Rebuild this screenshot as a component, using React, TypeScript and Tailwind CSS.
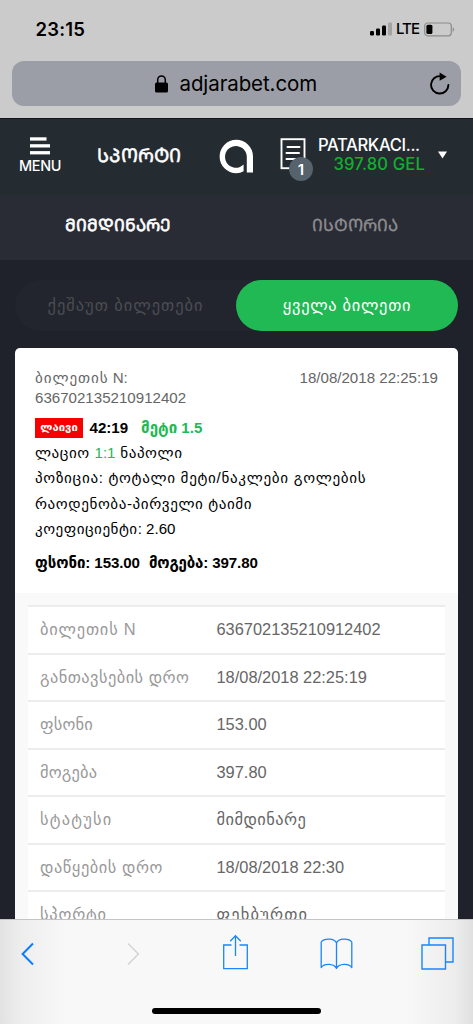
import React from 'react';

type Row = { label: string; value: string; labelClass?: string; valueClass?: string };

const rows: Row[] = [
  { label: 'ბილეთის N', value: '636702135210912402', labelClass: 'tracking-[0.8px]' },
  { label: 'განთავსების დრო', value: '18/08/2018 22:25:19', labelClass: 'tracking-[0.45px]' },
  { label: 'ფსონი', value: '153.00', labelClass: 'tracking-[0.2px]' },
  { label: 'მოგება', value: '397.80', labelClass: 'tracking-[0.2px]' },
  { label: 'სტატუსი', value: 'მიმდინარე', labelClass: 'tracking-[1.2px]', valueClass: 'tracking-[0.45px]' },
  { label: 'დაწყების დრო', value: '18/08/2018 22:30', labelClass: 'tracking-[0.55px]' },
  { label: 'სპორტი', value: 'ფეხბურთი', labelClass: 'tracking-[0.8px]', valueClass: 'tracking-[1.2px]' },
];

function StatusBar() {
  return (
    <div className="flex h-[61px] items-center justify-between pr-[18px] pl-[35.5px] font-['Inter',sans-serif] text-black">
      <span className="pb-[2px] text-[18.5px] font-semibold tracking-[0.2px]">23:15</span>
      <div className="flex items-center pb-[3px]">
        <svg width="22" height="14" viewBox="0 0 22 14">
          <rect x="0" y="9" width="4" height="4.5" rx="1.2" />
          <rect x="6" y="6.5" width="4" height="7" rx="1.2" />
          <rect x="12" y="3.5" width="4" height="10" rx="1.2" />
          <rect x="18" y="0.5" width="4" height="13" rx="1.2" fill="#a3a3a3" />
        </svg>
        <span className="ml-[4px] w-[23px] text-[15px] leading-[18px] font-medium tracking-[-0.95px]">LTE</span>
        <svg className="ml-[5px]" width="31" height="15" viewBox="0 0 31 15">
          <rect x="0.7" y="1" width="26.6" height="12.8" rx="3" fill="none" stroke="#8c8c8c" strokeWidth="1.2" />
          <rect x="2.4" y="2.7" width="6" height="9.4" rx="1.5" />
          <path d="M28.7 5.2c1.8.7 1.8 3.9 0 4.6z" fill="#8c8c8c" />
        </svg>
      </div>
    </div>
  );
}

function AddressBar() {
  return (
    <div className="mx-[12px] flex h-[45px] items-center rounded-[12px] bg-[#9b9ea6] pr-[10px] pl-[143px] text-black">
      <svg width="13" height="18" viewBox="0 0 13 18">
        <rect x="0" y="7.6" width="13" height="10" rx="1.6" />
        <path d="M2.7 8V4.9a3.8 4 0 0 1 7.6 0V8" fill="none" stroke="#000" strokeWidth="1.5" />
      </svg>
      <span className="ml-[11.5px] flex-1 font-['Inter',sans-serif] text-[20.5px] leading-[44px] tracking-[-0.1px]">adjarabet.com</span>
      <svg width="22" height="24" viewBox="0 0 22 24">
        <path d="M11.5 4.2A8.7 8.7 0 1 0 19.4 13" fill="none" stroke="#000" strokeWidth="1.9" strokeLinecap="round" />
        <path d="M10.6 0.5 17.6 4.7 10.6 8.8z" />
      </svg>
    </div>
  );
}

function SiteHeader() {
  return (
    <header className="flex h-[77px] items-start border-t border-[#12151d] bg-[#242b31] text-white">
      <div className="ml-[18px] flex w-[44px] flex-col items-center pt-[18px]">
        <svg width="20" height="18" viewBox="0 0 20 18" fill="#fff">
          <rect width="16.5" height="3.3" y="0.3" />
          <rect width="20" height="3.3" y="7.2" />
          <rect width="20" height="3.3" y="14.1" />
        </svg>
        <span className="mt-[2px] font-['Inter',sans-serif] text-[14.4px] leading-[18px] font-medium tracking-[-0.35px]">MENU</span>
      </div>
      <span className="mt-[24px] ml-[35px] w-[90px] font-['DejaVu_Sans',sans-serif] text-[19px] leading-[24px] whitespace-nowrap [-webkit-text-stroke:0.5px_#fff]">ᲡᲞᲝᲠᲢᲘ</span>
      <svg className="mt-[20px] ml-[32px]" width="35" height="36" viewBox="0 0 35 36">
        <path
          d="M34 17.5A16.7 16.7 0 1 0 17.3 34.2C20 34.2 22.5 33.4 24.6 32.2V25.6A10.9 10.9 0 1 1 27.8 17.5V33.4H34Z"
          fill="#fff"
        />
      </svg>
      <div className="relative mt-[19px] ml-[26px]">
        <svg width="26" height="32" viewBox="0 0 26 32" fill="none" stroke="#fff">
          <rect x="1.5" y="1.2" width="23" height="29" strokeWidth="1.9" />
          <path d="M7.5 9h12M6.5 15h12.5M6.5 21h12.5" strokeWidth="2" strokeLinecap="round" />
        </svg>
        <span className="absolute top-[19px] left-[9px] flex h-[24px] w-[24px] items-center justify-center rounded-full bg-[#56636d] font-['Inter',sans-serif] text-[15px] leading-none font-semibold">1</span>
      </div>
      <div className="mt-[17px] ml-[12px] w-[109px] font-['Inter',sans-serif] text-[16.6px] leading-[19px] font-medium whitespace-nowrap">
        <div className="tracking-[-0.35px]">PATARKACI...</div>
        <div className="pl-[15.5px] tracking-[0.15px] text-[#10b02e]">397.80 GEL</div>
      </div>
      <svg className="mt-[32px] ml-[11px]" width="9" height="8" viewBox="0 0 9 8">
        <path d="M0 0.5h9L4.5 7.5z" fill="#fff" />
      </svg>
    </header>
  );
}

function ViewTabs() {
  return (
    <nav className="flex h-[66px] border-b border-[#20222a] bg-[#292b35] pt-[18px] font-['DejaVu_Sans',sans-serif] text-[17px] leading-[24px]">
      <span className="flex-1 text-center text-white [-webkit-text-stroke:0.6px_#fff]">ᲛᲘᲛᲓᲘᲜᲐᲠᲔ</span>
      <span className="flex-1 text-center text-[#8d8d8f] [-webkit-text-stroke:0.3px_#8d8d8f]">ᲘᲡᲢᲝᲠᲘᲐ</span>
    </nav>
  );
}

function FilterToggle() {
  return (
    <div className="mx-[15px] mt-[19px] flex h-[51px] rounded-full bg-[#22252e] font-['Liberation_Sans','DejaVu_Sans',sans-serif] text-[16.4px] leading-[50px]">
      <span className="flex-1 text-center tracking-[1px] text-[#4c4d52]">ქეშაუთ ბილეთები</span>
      <span className="w-[222px] rounded-full bg-[#20b954] text-center tracking-[0.7px] text-white">ყველა ბილეთი</span>
    </div>
  );
}

function TicketSummary() {
  return (
    <div className="h-[245px] px-[20px] pt-[20px] text-[15.1px] leading-[25.2px] text-black">
      <div className="flex justify-between leading-[20px] text-[#666]">
        <div>
          <div><span className="tracking-[0.9px]">ბილეთის</span> N:</div>
          <div>636702135210912402</div>
        </div>
        <div>18/08/2018 22:25:19</div>
      </div>
      <div className="mt-[7px] flex items-center font-bold">
        <span className="flex h-[20px] w-[48px] items-center justify-center bg-[#f80000] text-[11.3px] text-white">ლაივი</span>
        <span className="ml-[6.5px]">42:19</span>
        <span className="ml-[13px] text-[#20b954]">მეტი 1.5</span>
      </div>
      <div className="tracking-[0.55px]">ლაციო <span className="tracking-normal text-[#20b954]">1:1</span> ნაპოლი</div>
      <div className="whitespace-nowrap tracking-[0.68px]">პოზიცია: ტოტალი მეტი/ნაკლები გოლების</div>
      <div className="tracking-[0.58px]">რაოდენობა-პირველი ტაიმი</div>
      <div><span className="tracking-[0.5px]">კოეფიციენტი</span>: 2.60</div>
      <div className="mt-[9px] flex gap-[9px] font-bold tracking-[-0.1px]">
        <span>ფსონი: 153.00</span>
        <span><span className="tracking-[-0.2px]">მოგება</span>: 397.80</span>
      </div>
    </div>
  );
}

function TicketDetails() {
  return (
    <div className="bg-[#f9f9f9] pt-[12px] pr-[13px] pl-[12.5px]">
      {rows.map((r) => (
        <div key={r.label} className="flex h-[47.55px] border-t-2 border-[#ececec] bg-white pl-[12.5px] text-[16.4px] leading-[45px]">
          <span className={`w-[176.5px] whitespace-nowrap text-[#999] ${r.labelClass ?? ''}`}>{r.label}</span>
          <span className={`text-[#666] ${r.valueClass ?? ''}`}>{r.value}</span>
        </div>
      ))}
    </div>
  );
}

function BrowserToolbar() {
  return (
    <footer className="flex h-[105px] flex-col border-t border-[#c4c4c4] bg-[linear-gradient(90deg,#e2e2e2_0,#ededed_4%,#f8f8f8_14%,#f8f8f8_86%,#ededed_96%,#e0e0e0_100%)]">
      <div className="flex h-[68px] items-center pl-[21px]">
        <svg width="13" height="24" viewBox="0 0 13 24" fill="none" stroke="#0a7cff" strokeWidth="2">
          <path d="M12 1.5 1.6 12 12 22.5" />
        </svg>
        <svg className="ml-[93px]" width="13" height="24" viewBox="0 0 13 24" fill="none" stroke="#d4d4d6" strokeWidth="1.6">
          <path d="M1 1.5 11.4 12 1 22.5" />
        </svg>
        <svg className="mb-[4px] ml-[82px]" width="26" height="36" viewBox="0 0 26 36" fill="none" stroke="#1a85ff" strokeWidth="1.3">
          <path d="M9.5 11H1.7v23.7h23.6V11h-7.8M13.5 22V1.5M8.2 7.2l5.3-5.4 5.3 5.4" />
        </svg>
        <svg className="ml-[72px]" width="33" height="32" viewBox="0 0 33 32" fill="none" stroke="#1a85ff" strokeWidth="1.3" strokeLinejoin="round">
          <path d="M16.5 5C14.5 0 4 0 1.2 4v25.5C4.5 25 14 25.5 16.5 30.5 19 25.5 28.5 25 31.8 29.5V4C29 0 18.5 0 16.5 5zv25.5" />
        </svg>
        <svg className="mb-[2px] ml-[67.5px]" width="33" height="34" viewBox="0 0 33 34" fill="none" stroke="#1a85ff" strokeWidth="1.4">
          <path d="M1 9h23.5v24H1zM8 9V2h24v24h-7.5" />
        </svg>
      </div>
      <div className="mx-auto mt-[20px] h-[6px] w-[169px] rounded-full bg-black" />
    </footer>
  );
}

export default function App() {
  return (
    <div className="flex h-[1024px] w-[473px] flex-col overflow-hidden bg-[#1f222a]">
      <div className="h-[118px] shrink-0 bg-[#cbcbcb]">
        <StatusBar />
        <AddressBar />
      </div>
      <SiteHeader />
      <ViewTabs />
      <main className="min-h-0 flex-1 overflow-hidden">
        <FilterToggle />
        <section className="mx-[15px] mt-[17px] overflow-hidden rounded-t-[5px] bg-white font-['Liberation_Sans','DejaVu_Sans',sans-serif]">
          <TicketSummary />
          <TicketDetails />
        </section>
      </main>
      <BrowserToolbar />
    </div>
  );
}
